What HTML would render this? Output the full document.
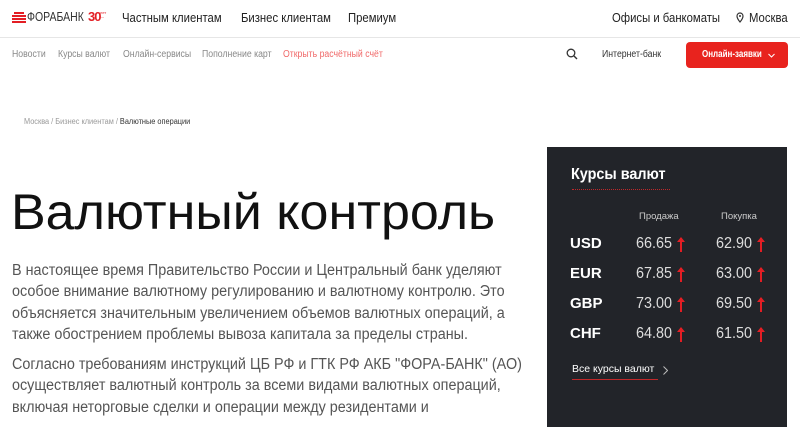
<!DOCTYPE html>
<html><head><meta charset="utf-8"><style>
*{margin:0;padding:0;box-sizing:border-box}
body{width:800px;height:414px;overflow:hidden;background:#fff;font-family:"Liberation Sans","DejaVu Sans",sans-serif;position:relative;color:#222}
.a{position:absolute;white-space:nowrap;transform-origin:0 0}
.top{font-size:13px;color:#222;transform:scaleX(.87)}
.sub{font-size:10px;color:#888;transform:scaleX(.87)}
p.t{font-size:15.3px;color:#555;line-height:21.3px;transform:scaleX(.94)}
.panel{position:absolute;left:547px;top:147px;width:240px;height:280px;background:#222429;color:#fff}
.panel .h{font-size:16px;font-weight:bold;transform:scaleX(.9)}
.rw{position:absolute;font-size:16px;left:0;width:240px}
.cur{position:absolute;left:23px;font-weight:bold;font-size:15px}
.v{position:absolute;font-size:16px;color:#ddd;transform:scaleX(.9);transform-origin:0 0}
.ar{position:absolute;width:2px;height:14px;background:#e31e24}
.ar:before{content:"";position:absolute;left:-3px;top:-1px;border-left:4px solid transparent;border-right:4px solid transparent;border-bottom:5px solid #e31e24}
</style></head><body>
<svg class="a" style="left:12px;top:12px" width="14" height="12" viewBox="0 0 14 12"><rect x="2" y="0" width="10" height="2" fill="#e31e24"/><rect x="0" y="3" width="14" height="2" fill="#e31e24"/><rect x="0" y="6" width="14" height="2" fill="#e31e24"/><rect x="0" y="9" width="14" height="2" fill="#e31e24"/></svg>
<div class="a" style="left:27px;top:10px;font-size:12.5px;color:#333;transform:scaleX(.84)">ФОРАБАНК</div>
<div class="a" style="left:88px;top:9px;font-size:13px;font-weight:bold;color:#e31e24;letter-spacing:-1px">30</div>
<div class="a" style="left:100px;top:11px;font-size:4px;color:#e31e24;line-height:4px">лет<br>—</div>
<div class="a top" style="left:122px;top:10px">Частным клиентам</div>
<div class="a top" style="left:241px;top:10px">Бизнес клиентам</div>
<div class="a top" style="left:348px;top:10px">Премиум</div>
<div class="a top" style="left:612px;top:10px">Офисы и банкоматы</div>
<svg class="a" style="left:736px;top:12px" width="8" height="11" viewBox="0 0 8 11"><path d="M4 10C1 6.5 1 5 1 4a3 3 0 0 1 6 0c0 1 0 2.5-3 6z" fill="none" stroke="#333" stroke-width="1.2"/><circle cx="4" cy="4" r="1" fill="#333"/></svg>
<div class="a top" style="left:749px;top:10px">Москва</div>
<div class="a" style="left:0;top:37px;width:800px;height:1px;background:#e6e6e6"></div>
<div class="a sub" style="left:12px;top:49px">Новости</div>
<div class="a sub" style="left:58px;top:49px">Курсы валют</div>
<div class="a sub" style="left:123px;top:49px">Онлайн-сервисы</div>
<div class="a sub" style="left:202px;top:49px">Пополнение карт</div>
<div class="a sub" style="left:283px;top:49px;color:#f06a6a">Открыть расчётный счёт</div>
<svg class="a" style="left:566px;top:48px" width="12" height="12" viewBox="0 0 12 12"><circle cx="5" cy="5" r="3.8" fill="none" stroke="#333" stroke-width="1.3"/><path d="M8 8l3 3" stroke="#333" stroke-width="1.4"/></svg>
<div class="a" style="left:602px;top:49px;font-size:10px;color:#333;transform:scaleX(.87)">Интернет-банк</div>
<div class="a" style="left:686px;top:42px;width:102px;height:26px;background:#e8231e;border-radius:4px"></div>
<div class="a" style="left:702px;top:49px;font-size:10px;font-weight:bold;color:#fff;transform:scaleX(.8)">Онлайн-заявки</div>
<svg class="a" style="left:768px;top:53px" width="7" height="5" viewBox="0 0 7 5"><path d="M.5 1l3 3 3-3" fill="none" stroke="#fff" stroke-width="1"/></svg>
<div class="a" style="left:24px;top:117px;font-size:8px;color:#999;transform:scaleX(.92)">Москва / Бизнес клиентам / <span style="color:#333">Валютные операции</span></div>
<div class="a" style="left:11px;top:183px;font-size:50px;color:#111;transform:scaleX(1.04)">Валютный контроль</div>
<p class="a t" style="left:12px;top:260px">В настоящее время Правительство России и Центральный банк уделяют<br>особое внимание валютному регулированию и валютному контролю. Это<br>объясняется значительным увеличением объемов валютных операций, а<br>также обострением проблемы вывоза капитала за пределы страны.</p>
<p class="a t" style="left:12px;top:354px">Согласно требованиям инструкций ЦБ РФ и ГТК РФ АКБ "ФОРА-БАНК" (АО)<br>осуществляет валютный контроль за всеми видами валютных операций,<br>включая неторговые сделки и операции между резидентами и</p>
<div class="panel">
<div class="a h" style="left:24px;top:19px">Курсы валют</div>
<div class="a" style="left:25px;top:42px;width:98px;border-top:1px dotted #c0282a"></div>
<div class="a" style="left:92px;top:64px;font-size:9.5px;color:#ccc">Продажа</div>
<div class="a" style="left:174px;top:64px;font-size:9.5px;color:#ccc">Покупка</div>
<div class="rw" style="top:88px"><span class="cur">USD</span><span class="v" style="left:89px">66.65</span><span class="ar" style="left:133px;top:3px"></span><span class="v" style="left:169px">62.90</span><span class="ar" style="left:213px;top:3px"></span></div>
<div class="rw" style="top:118px"><span class="cur">EUR</span><span class="v" style="left:89px">67.85</span><span class="ar" style="left:133px;top:3px"></span><span class="v" style="left:169px">63.00</span><span class="ar" style="left:213px;top:3px"></span></div>
<div class="rw" style="top:148px"><span class="cur">GBP</span><span class="v" style="left:89px">73.00</span><span class="ar" style="left:133px;top:3px"></span><span class="v" style="left:169px">69.50</span><span class="ar" style="left:213px;top:3px"></span></div>
<div class="rw" style="top:178px"><span class="cur">CHF</span><span class="v" style="left:89px">64.80</span><span class="ar" style="left:133px;top:3px"></span><span class="v" style="left:169px">61.50</span><span class="ar" style="left:213px;top:3px"></span></div>
<div class="a" style="left:25px;top:216px;font-size:10.5px;color:#fff">Все курсы валют</div>
<svg class="a" style="left:116px;top:219px" width="5" height="9" viewBox="0 0 5 9"><path d="M.5.5l4 4-4 4" fill="none" stroke="#bbb" stroke-width="1"/></svg>
<div class="a" style="left:25px;top:232px;width:86px;height:1px;background:#c0282a"></div>
</div>
</body></html>
